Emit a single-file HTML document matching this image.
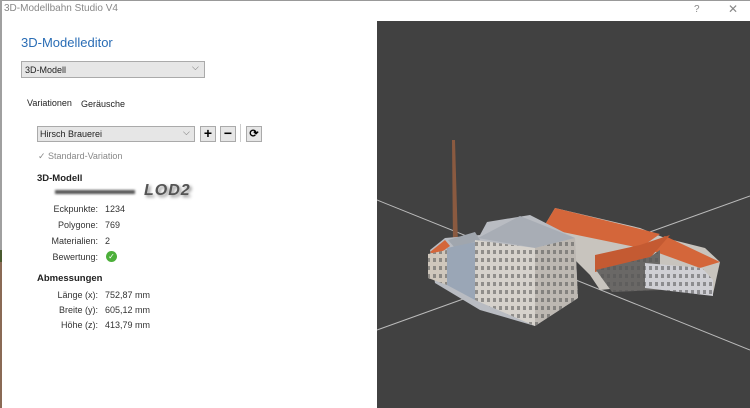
<!DOCTYPE html>
<html><head><meta charset="utf-8"><style>
html,body{margin:0;padding:0;width:750px;height:408px;overflow:hidden;background:#fff;font-family:"Liberation Sans",sans-serif;}
.abs{position:absolute;}
.t{font-size:9px;color:#222;}
.lbl{position:absolute;font-size:9px;color:#333;text-align:right;width:98px;left:0;}
.val{position:absolute;font-size:9px;color:#333;left:105px;}
</style></head><body>
<div class="abs" style="left:0;top:0;width:750px;height:1px;background:#999"></div>
<div class="abs" style="left:0;top:0;width:2px;height:408px;background:#a0a0a0"></div>
<div class="abs" style="left:0;top:250px;width:2px;height:12px;background:#4a5a30"></div>
<div class="abs" style="left:0;top:262px;width:2px;height:146px;background:#8a6a55"></div>
<div class="abs" style="left:4px;top:3px;font-size:10px;color:#888">3D-Modellbahn Studio V4</div>
<div class="abs" style="left:694px;top:4px;font-size:10px;color:#888">?</div>
<div class="abs" style="left:728px;top:2px;font-size:12px;color:#888">✕</div>
<div class="abs" style="left:21px;top:35px;font-size:13px;color:#2a6db5">3D-Modelleditor</div>
<div class="abs" style="left:21px;top:61px;width:182px;height:15px;border:1px solid #aaa;background:#e6e6e6"></div>
<div class="abs t" style="left:25px;top:65px">3D-Modell</div>
<div class="abs" style="left:192px;top:62px;font-size:9px;color:#666">⌵</div>
<div class="abs t" style="left:27px;top:98px">Variationen</div>
<div class="abs t" style="left:81px;top:99px">Geräusche</div>
<div class="abs" style="left:37px;top:126px;width:156px;height:14px;border:1px solid #aaa;background:#e6e6e6"></div>
<div class="abs t" style="left:40px;top:129px">Hirsch Brauerei</div>
<div class="abs" style="left:183px;top:127px;font-size:9px;color:#666">⌵</div>
<div class="abs" style="left:200px;top:126px;width:14px;height:14px;border:1px solid #aaa;background:#e6e6e6;font-size:14px;line-height:13px;text-align:center;font-weight:bold">+</div>
<div class="abs" style="left:220px;top:126px;width:14px;height:14px;border:1px solid #aaa;background:#e6e6e6;font-size:14px;line-height:12px;text-align:center;font-weight:bold">−</div>
<div class="abs" style="left:240px;top:124px;width:1px;height:18px;background:#ccc"></div>
<div class="abs" style="left:246px;top:126px;width:14px;height:14px;border:1px solid #aaa;background:#e6e6e6;font-size:11px;line-height:14px;text-align:center;font-weight:bold">⟳</div>
<div class="abs" style="left:38px;top:151px;font-size:9px;color:#888">✓ Standard-Variation</div>
<div class="abs" style="left:37px;top:173px;font-size:9.5px;font-weight:bold;color:#222">3D-Modell</div>
<div class="abs" style="left:55px;top:190px;width:80px;height:4px;background:#555;filter:blur(1px)"></div>
<div class="abs" style="left:144px;top:182px;font-size:16px;font-weight:bold;font-style:italic;color:#555;letter-spacing:1px;text-shadow:2px 2px 3px #888">LOD2</div>
<div class="abs" style="left:0;top:204px;width:300px">
<div class="lbl" style="top:0">Eckpunkte:</div><div class="val" style="top:0">1234</div>
<div class="lbl" style="top:16px">Polygone:</div><div class="val" style="top:16px">769</div>
<div class="lbl" style="top:32px">Materialien:</div><div class="val" style="top:32px">2</div>
<div class="lbl" style="top:48px">Bewertung:</div>
<div class="abs" style="left:106px;top:47px;width:11px;height:11px;border-radius:50%;background:#4caf3a;color:#fff;font-size:8px;line-height:11px;text-align:center">✓</div>
</div>
<div class="abs" style="left:37px;top:273px;font-size:9.5px;font-weight:bold;color:#222">Abmessungen</div>
<div class="abs" style="left:0;top:290px;width:300px">
<div class="lbl" style="top:0">Länge (x):</div><div class="val" style="top:0">752,87 mm</div>
<div class="lbl" style="top:15px">Breite (y):</div><div class="val" style="top:15px">605,12 mm</div>
<div class="lbl" style="top:30px">Höhe (z):</div><div class="val" style="top:30px">413,79 mm</div>
</div>
<svg class="abs" style="left:377px;top:21px" width="373" height="387" viewBox="377 21 373 387">
<defs>
<pattern id="w" width="6" height="8" patternUnits="userSpaceOnUse"><rect width="6" height="8" fill="none"/><rect x="1" y="2" width="3" height="4" fill="#555" opacity="0.55"/></pattern>
</defs>
<rect x="377" y="21" width="373" height="387" fill="#414141"/>
<line x1="377" y1="200" x2="750" y2="350" stroke="#bbb" stroke-width="1"/>
<line x1="377" y1="330" x2="750" y2="196" stroke="#bbb" stroke-width="1"/>
<polygon points="452,140 455,140 458,245 453,245" fill="#8a5a40"/>
<polygon points="543,228 555,208 640,228 665,238 705,248 720,262 713,294 650,285 600,290 590,275" fill="#c8c4be"/>
<polygon points="543,228 555,208 660,234 640,248" fill="#d4663a"/>
<polygon points="645,248 665,236 720,262 700,268" fill="#d4663a"/>
<polygon points="595,255 640,245 670,235 650,258 595,272" fill="#c45a32"/>
<polygon points="596,270 650,257 660,250 660,290 612,292" fill="#6a6866"/>
<polygon points="596,270 650,257 660,250 660,290 612,292" fill="url(#w)"/>
<polygon points="645,263 702,268 713,280 713,296 645,288" fill="#cfcfd4"/>
<polygon points="645,263 702,268 713,280 713,296 645,288" fill="url(#w)"/>
<polygon points="430,250 445,238 480,235 487,222 530,215 575,238 578,298 535,326 480,310 435,283" fill="#b9bcc2"/>
<polygon points="478,238 520,216 575,238 535,248" fill="#a8adb5"/>
<polygon points="448,240 475,232 480,240 455,248" fill="#a0a6ae"/>
<polygon points="430,252 445,240 450,246 436,256" fill="#d4663a"/>
<polygon points="475,240 535,248 535,326 475,300" fill="#d6d2cc"/>
<polygon points="475,240 535,248 535,326 475,300" fill="url(#w)"/>
<polygon points="535,248 575,238 578,298 535,326" fill="#bdb8b2"/>
<polygon points="535,248 575,238 578,298 535,326" fill="url(#w)"/>
<polygon points="447,248 475,242 475,300 447,285" fill="#9aa6b6"/>
<polygon points="428,254 447,250 447,285 428,278" fill="#cfc7bc"/>
<polygon points="428,254 447,250 447,285 428,278" fill="url(#w)"/>
</svg>
</body></html>
